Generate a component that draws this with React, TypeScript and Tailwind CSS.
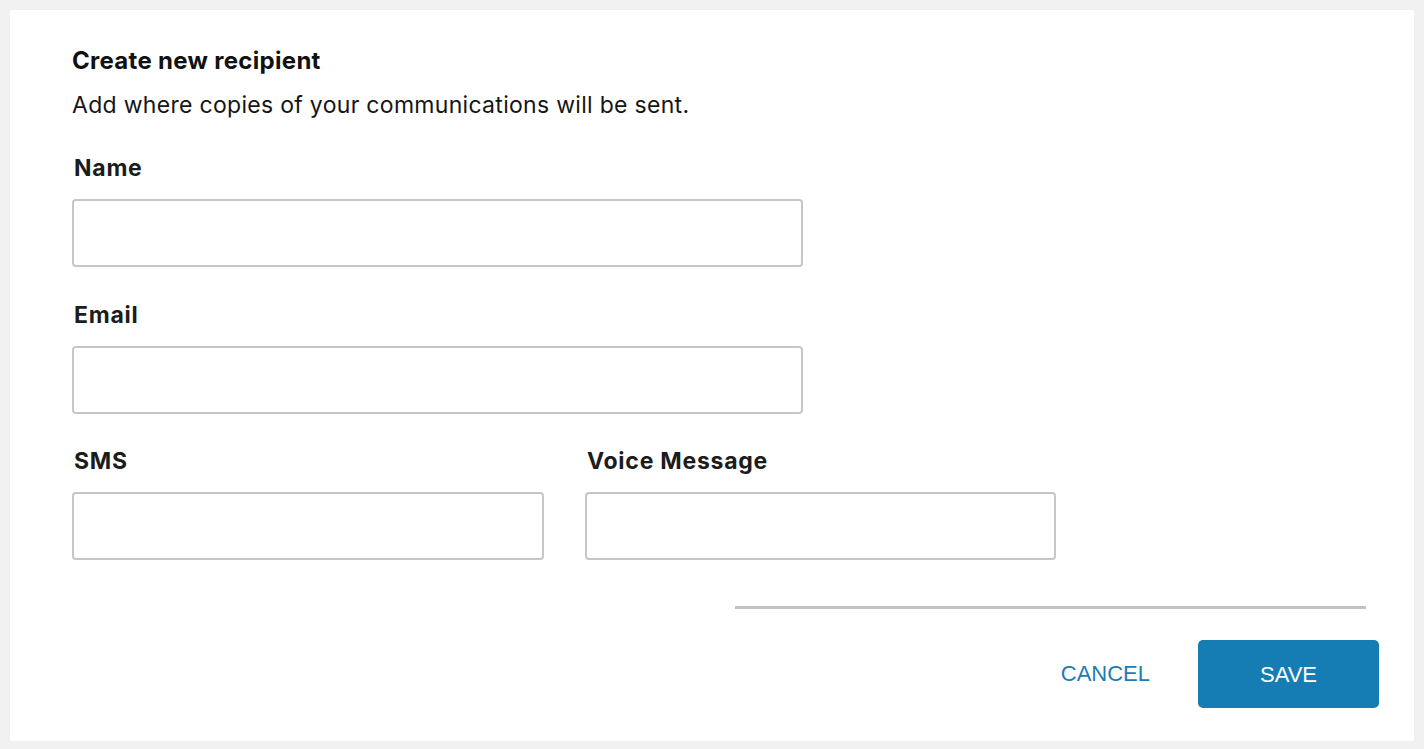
import React from "react";

function Field({ label, className }: { label: string; className: string }) {
  return (
    <div className={className}>
      <div className="pl-[2px] text-[23px] font-bold leading-[28px] tracking-[0.75px] text-[#1c1c1c]">{label}</div>
      <input
        type="text"
        className="mt-[17px] block h-[68px] w-full rounded-[4px] border-[2px] border-[#c6c6c6] bg-white px-3 outline-none"
      />
    </div>
  );
}

export default function App() {
  return (
    <div className="min-h-screen bg-[#f0f0f0] pt-[10px] pl-[10px] pr-[10px] pb-[8px] font-['Inter',sans-serif]">
      <div className="flex h-[731px] flex-col bg-white pt-[37px] pl-[62px] pr-[35px]">
        <h1 className="text-[24px] font-bold leading-[28px] tracking-[0.3px] text-[#111]">Create new recipient</h1>
        <p className="mt-[16px] text-[23px] leading-[28px] tracking-[0.3px] text-[#151515]">
          Add where copies of your communications will be sent.
        </p>
        <Field label="Name" className="mt-[35px] w-[731px]" />
        <Field label="Email" className="mt-[34px] w-[731px]" />
        <div className="mt-[33px] flex gap-[41px]">
          <Field label="SMS" className="w-[472px]" />
          <Field label="Voice Message" className="w-[471px]" />
        </div>
        <div className="mt-[46px] mr-[13px] h-[3px] w-[631px] self-end bg-[#c2c2c2]" />
        <div className="mt-[31px] flex items-center justify-end font-['Liberation_Sans',Arial,sans-serif]">
          <button className="text-[22px] leading-[28px] text-[#1a7db5]">CANCEL</button>
          <button className="ml-[48px] flex h-[68px] w-[181px] items-center justify-center rounded-[5px] bg-[#157db4] text-[22px] text-white">
            SAVE
          </button>
        </div>
      </div>
    </div>
  );
}
